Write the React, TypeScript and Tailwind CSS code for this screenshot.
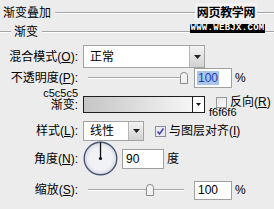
import React from "react";

const U = ({ c }: { c: string }) => (
  <span className="underline decoration-[1px] underline-offset-[1px]">{c}</span>
);

const Tri = () => (
  <svg width="7" height="4" viewBox="0 0 7 4">
    <path d="M0 0 H7 L3.5 4 Z" fill="#222" />
  </svg>
);

const DropBtn = () => (
  <div className="w-[15px] h-full flex items-center justify-center bg-gradient-to-b from-[#f4f4f4] to-[#d2d2d2] border-l border-[#b5b5b5]">
    <Tri />
  </div>
);

const Thumb = () => (
  <svg width="8" height="12" viewBox="0 0 8 12">
    <path
      d="M0.5 11.5 V3.5 Q0.5 0.5 4 0.5 Q7.5 0.5 7.5 3.5 V11.5 Z"
      fill="#f2f2f2"
      stroke="#8a8a8a"
    />
  </svg>
);

function Slider({ pos }: { pos: "a" | "b" }) {
  return (
    <div className="relative w-[96px] h-[14px] flex items-center">
      <div className="w-full h-[2px] border-t border-[#a8a8a8] border-b border-b-white" />
      <div
        className={
          pos === "a"
            ? "absolute left-[92px] top-[1px]"
            : "absolute left-[58px] top-[1px]"
        }
      >
        <Thumb />
      </div>
    </div>
  );
}

export default function App() {
  return (
    <div className="relative w-[274px] h-[209px] overflow-hidden bg-[#ececec] text-black text-[12px] font-['Liberation_Sans','Noto_Sans_CJK_SC',sans-serif]">
      {/* header 1 */}
      <div className="flex items-center h-[25px] pl-[3px]">
        <span className="leading-[14px]">渐变叠加</span>
        <div className="flex-1 ml-[4px] h-[2px] border-t border-[#a5a5a5] border-b border-b-white" />
      </div>
      {/* header 2 */}
      <div className="flex items-center h-[13px]">
        <div className="w-[11px] h-[2px] border-t border-[#a5a5a5] border-b border-b-white" />
        <span className="ml-[3px] leading-[14px]">渐变</span>
        <div className="flex-1 ml-[4px] h-[2px] border-t border-[#a5a5a5] border-b border-b-white" />
      </div>

      {/* watermark */}
      <div className="absolute left-[195px] top-[3px] w-[62px] h-[17px] bg-[#f3f3f3] flex items-center justify-center text-[12px] leading-[14px] font-bold font-['Noto_Sans_CJK_SC',sans-serif] tracking-[-0.3px]">
        网页教学网
      </div>
      <div className="absolute left-[190px] top-[24px] w-[75px] h-[9px] bg-black text-white flex items-center justify-center text-[9px] leading-[9px] font-bold font-['Liberation_Mono',monospace] tracking-[0.3px]">
        WWW.WEBJX.COM
      </div>

      {/* row 1: blend mode */}
      <div className="flex items-center h-[23px] mt-[7px]">
        <div className="w-[78px] text-right leading-[14px]">
          混合模式(<U c="O" />):
        </div>
        <div className="ml-[5px] w-[122px] h-[23px] flex bg-white border border-[#a3a3a3]">
          <div className="flex-1 flex items-center pl-[6px] leading-[14px]">正常</div>
          <DropBtn />
        </div>
      </div>

      {/* row 2: opacity */}
      <div className="flex items-center h-[20px]">
        <div className="w-[78px] text-right leading-[14px]">
          不透明度(<U c="P" />):
        </div>
        <div className="ml-[10px]">
          <Slider pos="a" />
        </div>
        <div className="ml-[10px] w-[38px] h-[20px] bg-white border border-[#a0a0a0] flex items-center pl-[2px]">
          <span className="bg-[#a9c4ea] text-[#1b3fa6] leading-[14px] px-[1px]">100</span>
        </div>
        <span className="ml-[3px] leading-[14px]">%</span>
      </div>

      {/* row 3: gradient */}
      <div className="flex items-start h-[26px]">
        <div className="w-[78px] flex flex-col items-end">
          <span className="text-[11px] leading-[9px] mt-[1px]">c5c5c5</span>
          <span className="leading-[14px] mt-[0px]">渐变:</span>
        </div>
        <div className="ml-[5px] mt-[8px] w-[122px] h-[17px] flex border border-[#1e1e1e]">
          <div className="flex-1 bg-gradient-to-r from-[#c5c5c5] to-[#f6f6f6]" />
          <div className="w-[12px] bg-white border-l border-[#1e1e1e] flex items-center justify-center">
            <svg width="5" height="3" viewBox="0 0 5 3">
              <path d="M0 0 H5 L2.5 3 Z" fill="#111" />
            </svg>
          </div>
        </div>
        <div className="ml-[11px] mt-[8px] flex flex-col">
          <div className="flex items-center">
            <div className="w-[11px] h-[11px] border border-[#9a9a9a] bg-gradient-to-br from-[#e2e2e2] to-white" />
            <span className="ml-[3px] leading-[13px]">
              反向(<U c="R" />)
            </span>
          </div>
          <span className="-ml-[7px] mt-[-1px] text-[11px] leading-[9px]">f6f6f6</span>
        </div>
      </div>

      {/* row 4: style */}
      <div className="flex items-center h-[20px] mt-[7px]">
        <div className="w-[78px] text-right leading-[14px]">
          样式(<U c="L" />):
        </div>
        <div className="ml-[5px] w-[61px] h-[20px] flex bg-white border border-[#a3a3a3]">
          <div className="flex-1 flex items-center pl-[6px] leading-[14px]">线性</div>
          <DropBtn />
        </div>
        <div className="ml-[11px] w-[11px] h-[11px] border border-[#8a8a9a] bg-[#ebebf3] flex items-center justify-center">
          <svg width="9" height="9" viewBox="0 0 9 9">
            <path d="M1.5 4.5 L3.5 7 L7.5 1.5" fill="none" stroke="#4646b0" strokeWidth="1.6" />
          </svg>
        </div>
        <span className="ml-[3px] leading-[14px]">
          与图层对齐(<U c="I" />)
        </span>
      </div>

      {/* row 5: angle */}
      <div className="flex items-center h-[35px]">
        <div className="w-[78px] text-right leading-[14px]">
          角度(<U c="N" />):
        </div>
        <div className="ml-[5px]">
          <svg width="35" height="35" viewBox="0 0 35 35">
            <defs>
              <radialGradient id="dg" cx="50%" cy="50%" r="50%">
                <stop offset="70%" stopColor="#f1f2f5" />
                <stop offset="100%" stopColor="#d6d9e2" />
              </radialGradient>
            </defs>
            <circle cx="17.5" cy="17.5" r="16.3" fill="url(#dg)" stroke="#4a5572" strokeWidth="1.4" />
            <line x1="17.5" y1="17.5" x2="17.5" y2="1.5" stroke="#111" strokeWidth="1.3" />
            <circle cx="17.5" cy="17.5" r="1.6" fill="#111" />
          </svg>
        </div>
        <div className="ml-[4px] w-[42px] h-[20px] bg-white border border-[#a0a0a0] flex items-center pl-[3px] leading-[14px]">
          90
        </div>
        <span className="ml-[3px] leading-[14px]">度</span>
      </div>

      {/* row 6: scale */}
      <div className="flex items-center h-[28px]">
        <div className="w-[78px] text-right leading-[14px]">
          缩放(<U c="S" />):
        </div>
        <div className="ml-[10px]">
          <Slider pos="b" />
        </div>
        <div className="ml-[10px] w-[38px] h-[19px] bg-white border border-[#a0a0a0] flex items-center pl-[3px] leading-[14px]">
          100
        </div>
        <span className="ml-[3px] leading-[14px]">%</span>
      </div>
    </div>
  );
}
